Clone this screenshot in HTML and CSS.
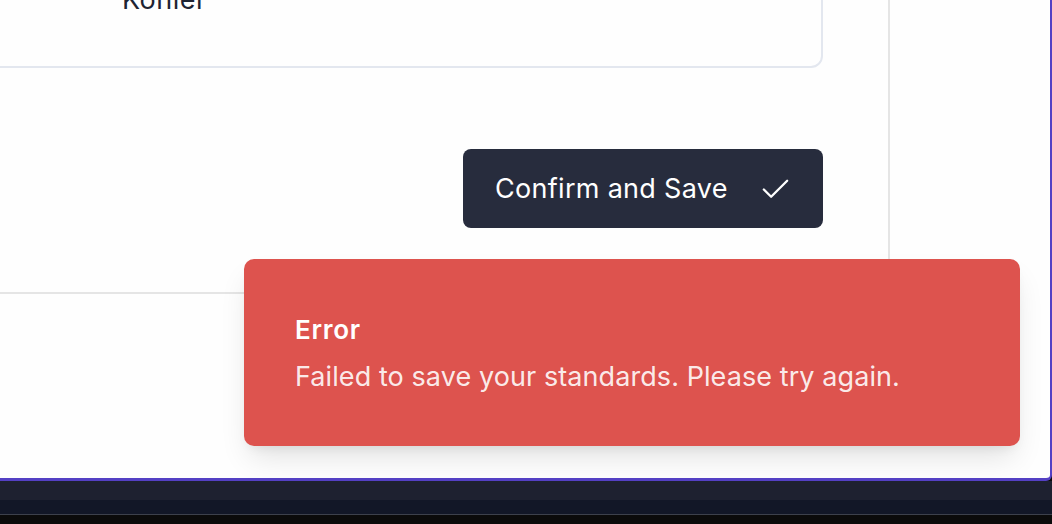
FILE: index.html
```html
<!DOCTYPE html>
<html lang="en">
<head>
<meta charset="utf-8">
<title>Confirm standards</title>
<link rel="stylesheet" href="styles.css">
</head>
<body>
<div class="app">
  <div class="window">
    <div class="main">
      <section class="panel">
        <div class="card">
          <div class="row"><span class="value">Kohler</span></div>
        </div>
        <div class="actions">
          <button class="btn" type="button">
            <span class="btn-label">Confirm and Save</span>
            <svg class="btn-icon" viewBox="0 0 24 24" width="35" height="35" fill="none" stroke="currentColor" stroke-width="1.6" stroke-linecap="round" stroke-linejoin="round"><path d="M20 6 9 17l-5-5"/></svg>
          </button>
        </div>
      </section>
    </div>
    <div class="toast" role="alert">
      <div class="toast-title">Error</div>
      <div class="toast-desc">Failed to save your standards. Please try again.</div>
    </div>
  </div>
  <div class="taskbar">
    <div class="bar bar-top"></div>
    <div class="bar bar-mid"></div>
    <div class="bar bar-line"></div>
    <div class="bar bar-bottom"></div>
  </div>
</div>
</body>
</html>
```
FILE: styles.css
```css
html, body {
  margin: 0;
  padding: 0;
  height: 100%;
  overflow: hidden;
  background: #0b0b0b;
  font-family: Inter, "Noto Sans", "Liberation Sans", sans-serif;
}

.app {
  display: flex;
  flex-direction: column;
  height: 524px;
}

.window {
  position: relative;
  height: 478px;
  background: #fefefe;
  border-right: 2px solid #5440c4;
  border-bottom: 3px solid #5440c4;
  border-bottom-right-radius: 6px;
  overflow: hidden;
  flex: none;
}

.main {
  display: flex;
}

.panel {
  margin-top: -64px;
  margin-left: -40px;
  width: 930px;
  padding: 24px 65px 64px 0;
  box-sizing: border-box;
  border-right: 2px solid #e5e5e5;
  border-bottom: 2px solid #e5e5e5;
  display: flex;
  flex-direction: column;
}

.card {
  border: 2px solid #e3e7ef;
  border-radius: 12px;
  padding: 20px 32px 48px 160px;
}

.row {
  display: flex;
}

.value {
  font-size: 27px;
  line-height: 36px;
  letter-spacing: 0.5px;
  color: #1e2433;
}

.actions {
  display: flex;
  justify-content: flex-end;
  margin-top: 81px;
}

.btn {
  display: flex;
  align-items: center;
  height: 79px;
  width: 360px;
  box-sizing: border-box;
  padding: 1px 30px 0 32px;
  background: #272c3d;
  color: #ffffff;
  border: none;
  border-radius: 8px;
  font-family: inherit;
  font-size: 27px;
  line-height: 36px;
  letter-spacing: 0.3px;
  text-align: left;
  white-space: nowrap;
}

.btn-label {
  flex: none;
}

.btn-icon {
  flex: none;
  margin-left: auto;
}

.toast {
  position: absolute;
  right: 30px;
  bottom: 32px;
  width: 776px;
  height: 187px;
  box-sizing: border-box;
  padding: 3px 40px 0 51px;
  background: #dd534e;
  border-radius: 10px;
  color: #ffffff;
  display: flex;
  flex-direction: column;
  justify-content: center;
  gap: 13px;
  box-shadow: 0 16px 30px -6px rgba(0, 0, 0, 0.12), 0 6px 12px -6px rgba(0, 0, 0, 0.1);
}

.toast-title {
  font-size: 26px;
  line-height: 32px;
  font-weight: 600;
  letter-spacing: 0.7px;
}

.toast-desc {
  font-size: 27px;
  line-height: 36px;
  letter-spacing: 0.08px;
  color: rgba(255, 255, 255, 0.9);
}

.taskbar {
  flex: 1;
  display: flex;
  flex-direction: column;
}

.bar-top {
  height: 19px;
  background: #1e2130;
}

.bar-mid {
  height: 14px;
  background: #121727;
}

.bar-line {
  height: 1px;
  background: #3d414c;
}

.bar-bottom {
  flex: 1;
  background: #0b0b0b;
}
```
